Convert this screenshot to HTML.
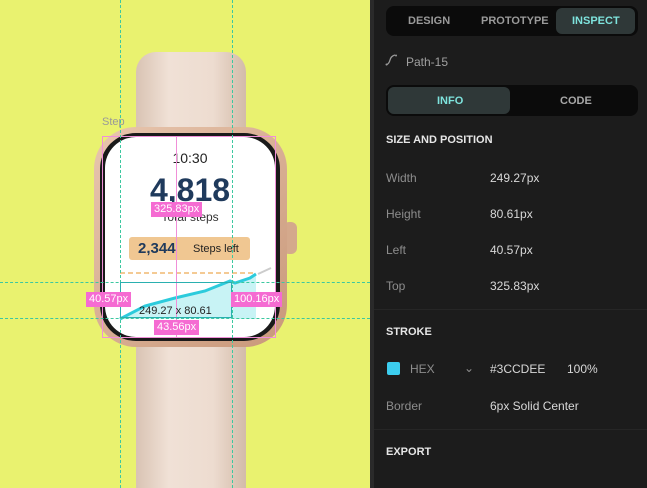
<!DOCTYPE html>
<html><head><style>
*{margin:0;padding:0;box-sizing:border-box}
body{width:647px;height:488px;overflow:hidden;background:#1c1c1c;font-family:"Liberation Sans",sans-serif;position:relative}
.a{position:absolute}
.left{left:0;top:0;width:370px;height:488px;background:#e9f26f;overflow:hidden}
.div{left:370px;top:0;width:4px;height:488px;background:#2a2a2a}
.t{color:#8d8d8d;font-size:12px}
.v{color:#d8d8d8;font-size:12px}
.h{color:#e6e6e6;font-size:11px;font-weight:bold}
.tag{background:#f56bd2;color:#fff;font-size:11px;padding:1px 3px;position:absolute;line-height:13px}
.dl{position:absolute;border-left:1px dashed #3cc8a0}
.dh{position:absolute;border-top:1px dashed #3cc8a0}
</style></head><body>
<div class="a left">
 <div class="a" style="left:136px;top:52px;width:110px;height:100px;background:linear-gradient(90deg,#d9c3b3,#f0e1d6 30%,#eddcd0 70%,#d3bba9);border-radius:20px 20px 0 0"></div>
 <div class="a" style="left:136px;top:320px;width:110px;height:170px;background:linear-gradient(90deg,#d9c3b3,#f0e1d6 30%,#eddcd0 70%,#d3bba9)"></div>
 <div class="a" style="left:283px;top:222px;width:14px;height:32px;background:#d4a98c;border-radius:6px"></div>
 <div class="a" style="left:94px;top:127px;width:193px;height:220px;background:linear-gradient(135deg,#e8c6ae,#c9987a);border-radius:42px"></div>
 <div class="a" style="left:100px;top:133px;width:180px;height:208px;background:#1a1a1a;border-radius:36px"></div>
 <div class="a" style="left:105px;top:137px;width:170px;height:200px;background:#fff;border-radius:31px;overflow:hidden">
  <div class="a" style="left:0;width:170px;top:13px;text-align:center;font-size:14px;color:#222">10:30</div>
  <div class="a" style="left:0;width:170px;top:35px;text-align:center;font-size:32px;font-weight:bold;color:#1f3a5c">4,818</div>
  <div class="a" style="left:0;width:170px;top:73px;text-align:center;font-size:12px;color:#333">Total steps</div>
  <div class="a" style="left:24px;top:100px;width:121px;height:23px;background:#f0c792;border-radius:3px"></div>
  <div class="a" style="left:33px;top:103px;font-size:15px;font-weight:bold;color:#1f3a5c">2,344</div>
  <div class="a" style="left:88px;top:106px;font-size:11px;color:#222">Steps left</div>
  <svg class="a" style="left:0;top:0" width="170" height="200">
   <line x1="15" y1="136" x2="151" y2="136" stroke="#f0b870" stroke-width="1.5" stroke-dasharray="5 3"/>
   <path d="M15 182 L40 169 L70 161 L100 154 L125 144 L130 146 L145 141 L151 137 L151 182Z" fill="#c8f3f5"/>
   <path d="M15 182 L40 169 L70 161 L100 154 L125 144 L130 146 L145 141 L151 137" fill="none" stroke="#2ccbdc" stroke-width="3"/>
   <path d="M153 137 L166 131" stroke="#ccc" stroke-width="2"/>
  </svg>
 </div>
 <div class="a" style="left:102px;top:116px;font-size:11px;color:#999">Step</div>
 <div class="a" style="left:102px;top:136px;width:174px;height:202px;border:1px solid #f08fd8"></div>
 <div class="a" style="left:176px;top:136px;width:1px;height:202px;background:#f08fd8"></div>
 <div class="dl" style="left:120px;top:0;height:488px"></div>
 <div class="dl" style="left:232px;top:0;height:488px"></div>
 <div class="dh" style="left:0;top:282px;width:370px"></div>
 <div class="dh" style="left:0;top:318px;width:370px"></div>
 <div class="a" style="left:120px;top:282px;width:112px;height:36px;border:1px solid #2ab0b0"></div>
 <div class="tag" style="left:151px;top:202px">325.83px</div>
 <div class="tag" style="left:86px;top:292px">40.57px</div>
 <div class="tag" style="left:231px;top:292px">100.16px</div>
 <div class="tag" style="left:154px;top:320px">43.56px</div>
 <div class="a" style="left:139px;top:305px;font-size:11px;color:#222">249.27 x 80.61</div>
</div>
<div class="a div"></div>
<div class="a" style="left:386px;top:6px;width:252px;height:30px;background:#0b0b0b;border-radius:8px"></div>
<div class="a" style="left:556px;top:8px;width:79px;height:26px;background:#2f3838;border-radius:6px"></div>
<div class="a h" style="left:408px;top:15px;color:#9a9a9a">DESIGN</div>
<div class="a h" style="left:481px;top:15px;color:#9a9a9a">PROTOTYPE</div>
<div class="a h" style="left:572px;top:15px;color:#7ee3dd">INSPECT</div>
<svg class="a" style="left:385px;top:54px" width="14" height="12"><path d="M1 11 Q4 10 5 6 Q6 2 10 1" fill="none" stroke="#999" stroke-width="1.3"/><circle cx="1.5" cy="10.5" r="1" fill="#999"/><circle cx="11" cy="1.5" r="1" fill="#999"/></svg>
<div class="a t" style="left:406px;top:55px;color:#a0a0a0">Path-15</div>
<div class="a" style="left:386px;top:85px;width:252px;height:31px;background:#0b0b0b;border-radius:8px"></div>
<div class="a" style="left:388px;top:87px;width:122px;height:27px;background:#2f3838;border-radius:6px"></div>
<div class="a h" style="left:437px;top:95px;color:#7ee3dd">INFO</div>
<div class="a h" style="left:560px;top:95px;color:#a8a8a8">CODE</div>
<div class="a h" style="left:386px;top:134px">SIZE AND POSITION</div>
<div class="a t" style="left:386px;top:171px">Width</div><div class="a v" style="left:490px;top:171px">249.27px</div>
<div class="a t" style="left:386px;top:207px">Height</div><div class="a v" style="left:490px;top:207px">80.61px</div>
<div class="a t" style="left:386px;top:243px">Left</div><div class="a v" style="left:490px;top:243px">40.57px</div>
<div class="a t" style="left:386px;top:279px">Top</div><div class="a v" style="left:490px;top:279px">325.83px</div>
<div class="a" style="left:374px;top:309px;width:273px;height:1px;background:#262626"></div>
<div class="a h" style="left:386px;top:326px">STROKE</div>
<div class="a" style="left:387px;top:362px;width:13px;height:13px;background:#3ccdee;border-radius:2px"></div>
<div class="a t" style="left:410px;top:362px">HEX</div>
<div class="a t" style="left:464px;top:361px">&#x2304;</div>
<div class="a v" style="left:490px;top:362px">#3CCDEE</div>
<div class="a v" style="left:567px;top:362px">100%</div>
<div class="a t" style="left:386px;top:399px">Border</div><div class="a v" style="left:490px;top:399px">6px Solid Center</div>
<div class="a" style="left:374px;top:429px;width:273px;height:1px;background:#262626"></div>
<div class="a h" style="left:386px;top:446px">EXPORT</div>
</body></html>
